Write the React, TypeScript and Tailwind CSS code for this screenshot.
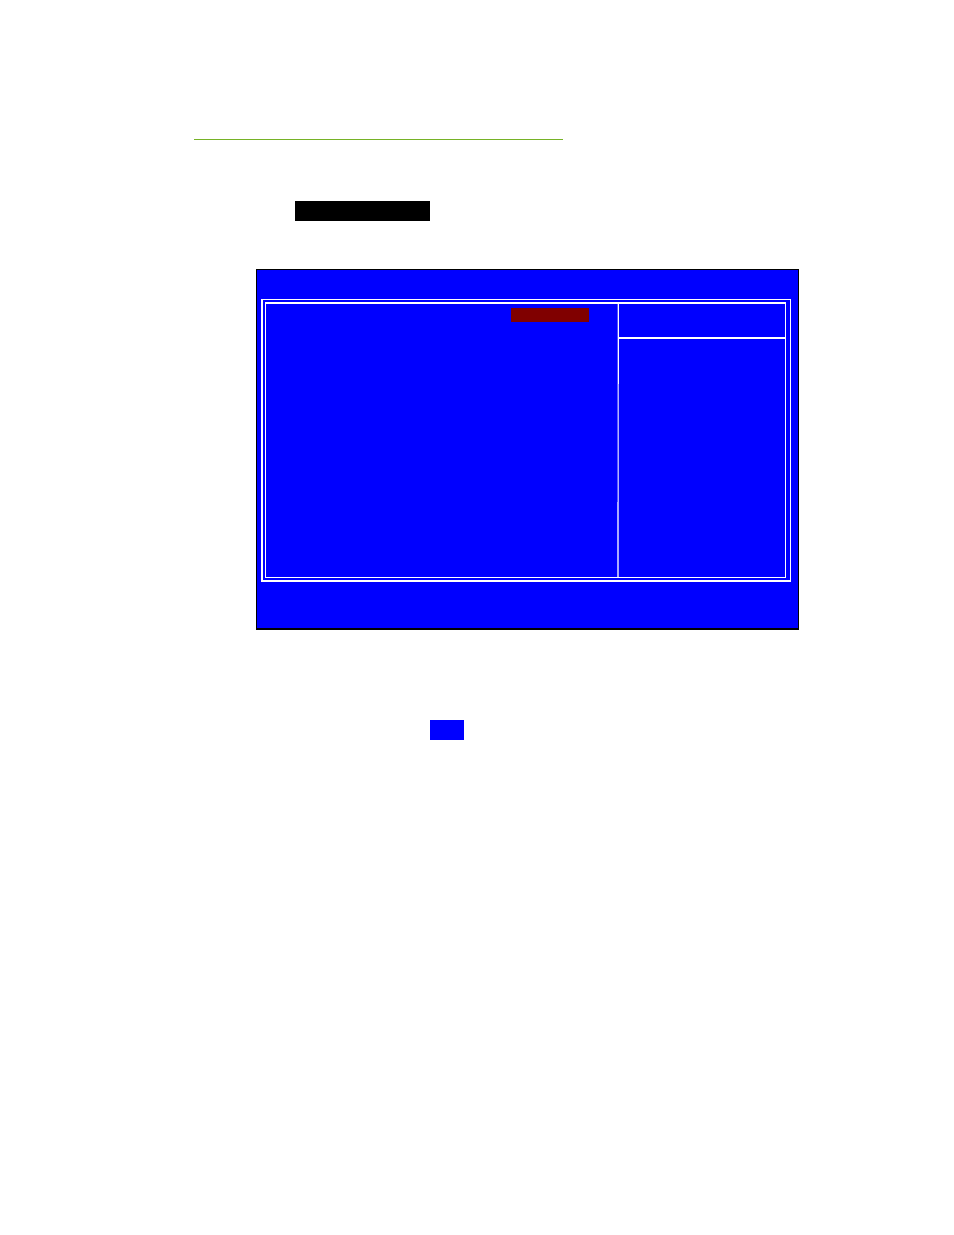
const dividerParts = [
  { size: "h-20", left: "bg-[#5555ff]", right: "bg-white" },
  { size: "h-[118px]", left: "bg-[#5f5fff]", right: "bg-[#b4b4ff]" },
  { size: "flex-1", left: "bg-[#aaaaff]", right: "bg-[#aaaaff]" },
];

const SetupScreen = () => {
  return (
    <section className="flex flex-col border border-b-2 border-black bg-[#0000ff] pt-[29px] pr-[7px] pb-[46px] pl-1">
      <div className="border border-b-2 border-l-2 border-white pt-0.5 pr-1 pb-0.5 pl-0.5">
        <div className="flex h-[276px] border border-t-2 border-white">
          <div className="flex flex-1 justify-end pt-1 pr-7">
            <div className="h-3.5 w-[78px] bg-[#800000]" />
          </div>

          <div className="flex w-0.5 flex-col">
            {dividerParts.map((part, index) => (
              <div key={index} className={`flex ${part.size}`}>
                <div className={`w-px ${part.left}`} />
                <div className={`w-px ${part.right}`} />
              </div>
            ))}
          </div>

          <div className="w-[32%]">
            <div className="h-[35px] border-b-2 border-white" />
          </div>
        </div>
      </div>
    </section>
  );
};

const App = () => {
  return (
    <main className="min-h-screen bg-white pt-[139px] pr-[155px] pb-16 pl-[194px]">
      <hr className="w-[369px] border-t border-[#76b227]" />

      <div className="pt-[61px] pl-[101px]">
        <div className="h-5 w-[135px] bg-black" />
      </div>

      <div className="pt-12 pl-[62px]">
        <SetupScreen />
      </div>

      <div className="pt-[90px] pl-[236px]">
        <div className="h-5 w-[34px] bg-[#0000ff]" />
      </div>
    </main>
  );
};

export default App;
